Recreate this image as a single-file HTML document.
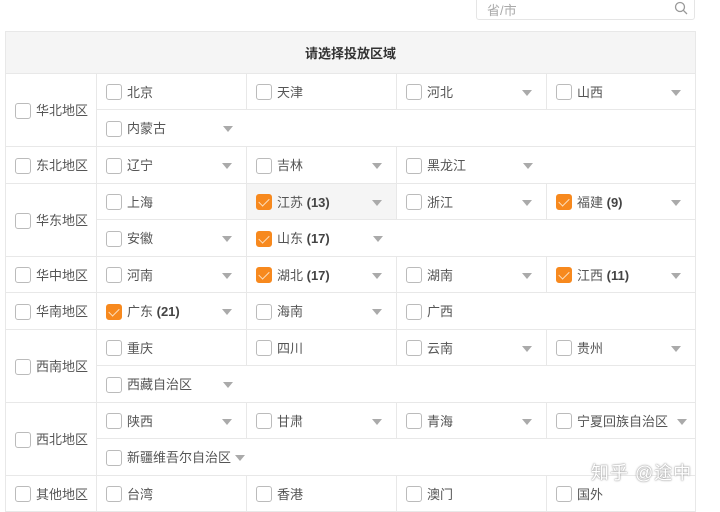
<!DOCTYPE html>
<html><head><meta charset="utf-8"><style>
*{box-sizing:border-box;margin:0;padding:0}
body{width:720px;height:504px;background:#fff;overflow:hidden;position:relative;font-family:"Liberation Sans","Noto Sans CJK SC",sans-serif;font-size:13px;color:#555}
.search{position:absolute;left:476px;top:-5px;width:219px;height:25px;border:1px solid #e5e5e5;border-radius:3px;color:#aaa;padding:4px 10px;font-size:13px}
.search svg{position:absolute;right:6px;top:5px}
table{position:absolute;left:5px;top:31px;border-collapse:collapse;table-layout:fixed;width:690px}
td{border:1px solid #e8e8e8;padding:0 0 0 9px;white-space:nowrap;position:relative;vertical-align:middle}
th{height:42px;background:#f5f5f5;border:1px solid #e8e8e8;font-weight:bold;color:#333;font-size:13px}
.cb{display:inline-block;width:16px;height:16px;border:1px solid #bbb;border-radius:3px;vertical-align:middle;margin-right:5px;position:relative;top:-1px}
.on{background:#f7891e;border-color:#f7891e}
.on::after{content:"";position:absolute;left:4px;top:1px;width:5px;height:9px;border:solid #fde0c0;border-width:0 1.5px 1.5px 0;transform:rotate(45deg)}
.ar{position:absolute;right:14px;top:50%;margin-top:-2px;border:5px solid transparent;border-top:6px solid #aaa;border-bottom:0}
.sh{background:#f5f5f5}
.e{border-left:hidden}
b{font-weight:bold;color:#444}
.wm{position:absolute;left:591px;top:459px;font-size:18px;color:#fff;text-shadow:0 0 2px #999,0 0 1px #888;letter-spacing:1px}
</style></head><body>
<div class="search">省/市<svg width="14" height="14" viewBox="0 0 14 14"><circle cx="6" cy="6" r="4.5" fill="none" stroke="#999" stroke-width="1.3"/><line x1="9.3" y1="9.3" x2="13" y2="13" stroke="#999" stroke-width="1.3"/></svg></div>
<table>
<colgroup><col style="width:91px"><col style="width:150px"><col style="width:150px"><col style="width:150px"><col style="width:149px"></colgroup>
<tr><th colspan="5">请选择投放区域</th></tr>
<tr style="height:36px"><td rowspan="2"><span class="cb"></span>华北地区</td><td><span class="cb"></span>北京</td><td><span class="cb"></span>天津</td><td><span class="cb"></span>河北<i class="ar"></i></td><td><span class="cb"></span>山西<i class="ar"></i></td></tr>
<tr style="height:37px"><td><span class="cb"></span>内蒙古<i class="ar"></i></td><td colspan="3" class="e"></td></tr>
<tr style="height:37px"><td><span class="cb"></span>东北地区</td><td><span class="cb"></span>辽宁<i class="ar"></i></td><td><span class="cb"></span>吉林<i class="ar"></i></td><td><span class="cb"></span>黑龙江<i class="ar"></i></td><td class="e"></td></tr>
<tr style="height:36px"><td rowspan="2"><span class="cb"></span>华东地区</td><td><span class="cb"></span>上海</td><td class="sh"><span class="cb on"></span>江苏 <b>(13)</b><i class="ar"></i></td><td><span class="cb"></span>浙江<i class="ar"></i></td><td><span class="cb on"></span>福建 <b>(9)</b><i class="ar"></i></td></tr>
<tr style="height:37px"><td><span class="cb"></span>安徽<i class="ar"></i></td><td><span class="cb on"></span>山东 <b>(17)</b><i class="ar"></i></td><td colspan="2" class="e"></td></tr>
<tr style="height:36px"><td><span class="cb"></span>华中地区</td><td><span class="cb"></span>河南<i class="ar"></i></td><td><span class="cb on"></span>湖北 <b>(17)</b><i class="ar"></i></td><td><span class="cb"></span>湖南<i class="ar"></i></td><td><span class="cb on"></span>江西 <b>(11)</b><i class="ar"></i></td></tr>
<tr style="height:37px"><td><span class="cb"></span>华南地区</td><td><span class="cb on"></span>广东 <b>(21)</b><i class="ar"></i></td><td><span class="cb"></span>海南<i class="ar"></i></td><td><span class="cb"></span>广西</td><td class="e"></td></tr>
<tr style="height:36px"><td rowspan="2"><span class="cb"></span>西南地区</td><td><span class="cb"></span>重庆</td><td><span class="cb"></span>四川</td><td><span class="cb"></span>云南<i class="ar"></i></td><td><span class="cb"></span>贵州<i class="ar"></i></td></tr>
<tr style="height:37px"><td><span class="cb"></span>西藏自治区<i class="ar"></i></td><td colspan="3" class="e"></td></tr>
<tr style="height:36px"><td rowspan="2"><span class="cb"></span>西北地区</td><td><span class="cb"></span>陕西<i class="ar"></i></td><td><span class="cb"></span>甘肃<i class="ar"></i></td><td><span class="cb"></span>青海<i class="ar"></i></td><td><span class="cb"></span>宁夏回族自治区<i class="ar" style="right:8px"></i></td></tr>
<tr style="height:37px"><td colspan="4"><span class="cb"></span>新疆维吾尔自治区 <i class="ar" style="position:static;display:inline-block;vertical-align:middle"></i></td></tr>
<tr style="height:36px"><td><span class="cb"></span>其他地区</td><td><span class="cb"></span>台湾</td><td><span class="cb"></span>香港</td><td><span class="cb"></span>澳门</td><td><span class="cb"></span>国外</td></tr>
</table>
<div class="wm">知乎 @途中</div>
</body></html>
